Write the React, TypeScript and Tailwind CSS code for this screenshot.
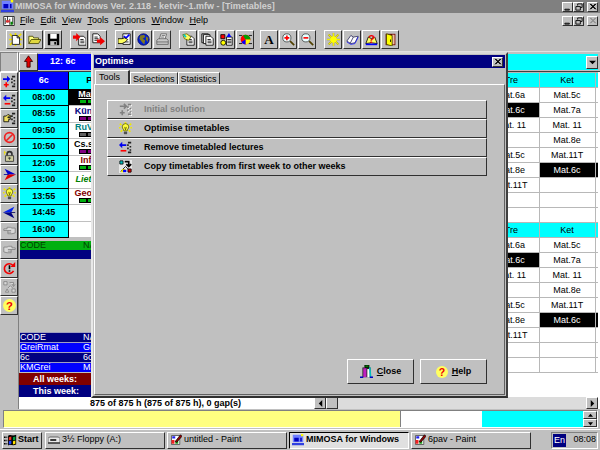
import React, { useState } from 'react';
import clsx from 'clsx';

const RAISED = 'border border-t-white border-l-white border-r-[#303030] border-b-[#303030] bg-[#c0c0c0]';
const SUNKEN = 'border border-t-[#808080] border-l-[#808080] border-r-white border-b-white';

type IconName =
  | 'app' | 'doc' | 'new' | 'open' | 'save' | 'import' | 'export' | 'props' | 'world' | 'print'
  | 'find' | 'copy' | 'shapes' | 'pie' | 'zoomIn' | 'zoomOut' | 'sun' | 'book' | 'guide' | 'exit'
  | 'up' | 'add' | 'remove' | 'initial' | 'hand' | 'forbid' | 'lock' | 'right' | 'bulb' | 'left' | 'font'
  | 'handLeft' | 'handRight' | 'cycle' | 'weeksOff' | 'weeks' | 'help' | 'close' | 'windows' | 'floppy' | 'paint';

// column of lecture marks shared by the add / remove / initial icons
const dots = (fill: string) => <path d="M11 1h4v2h-4zM10 4h2v2h-2zM13 6h2v2h-2zM10 8h2v2h-2zM13 10h2v2h-2zM11 13h4v2h-4z" fill={fill} />;

const page = (x: number, y: number) => (
  <g transform={`translate(${x} ${y})`}>
    <path d="M0 0h6l3 3v8h-9z" fill="#fff" stroke="#000" />
    <path d="M2 4h4M2 6h5M2 8h5" stroke="#000" />
  </g>
);

const ICONS: Record<IconName, React.ReactNode> = {
  app: (
    <>
      <path d="M1 1h14v10H1z" fill="#7080ff" />
      <path d="M0 12h16v3H0z" fill="#3040e0" />
      <path d="M3 5h6v5H3zM11 5h2v5h-2z" fill="#0000c0" />
      <path d="M12 0h3v3h-3z" fill="#ff0" />
    </>
  ),
  doc: (
    <>
      <path d="M1 2h14v12H1z" fill="#fff" stroke="#000" />
      <path d="M3 4v8M6 2v8M9 5v8M13 3v9" stroke="#000" />
      <path d="M4 7h5v3H4z" fill="#e03030" />
      <path d="M10 9h3v4h-3z" fill="#008000" />
    </>
  ),
  new: (
    <>
      <path d="M8 0v16M0 8h16M1 1l14 14M15 1L1 15" stroke="#f0e000" strokeWidth="2" />
      <path d="M4 3h6l3 3v8H4z" fill="#fff" stroke="#000" />
      <path d="M10 3v3h3" fill="none" stroke="#000" />
    </>
  ),
  open: (
    <>
      <path d="M1 13V4h5l1 2h6v3" fill="#ffff80" stroke="#404000" />
      <path d="M1 13l3-5h12l-3 5z" fill="#e0d840" stroke="#404000" />
    </>
  ),
  save: (
    <>
      <path d="M1 1h14v14H1z" fill="#000" />
      <path d="M4 1h8v6H4z" fill="#fff" />
      <path d="M4 10h8v5H4z" fill="#c0c0c0" />
      <path d="M9 11h2v3H9z" fill="#000" />
    </>
  ),
  import: (
    <>
      {page(7, 4)}
      <path d="M0 3h4V0l5 5-5 5V7H0z" fill="#f00000" />
    </>
  ),
  export: (
    <>
      {page(1, 1)}
      <path d="M6 8h4V5l6 5-6 5v-3H6z" fill="#f00000" />
    </>
  ),
  props: (
    <>
      <path d="M6 1h9v13H6z" fill="#fff" stroke="#000" />
      <path d="M7 4l3 2 4-4" stroke="#00f" fill="none" strokeWidth="2" />
      <path d="M8 11h5" stroke="#000" />
      <path d="M0 7h5l3-1 4 2-3 3-4 2H0z" fill="#ffff60" stroke="#000" />
    </>
  ),
  world: (
    <>
      <circle cx="8" cy="8" r="7" fill="#0020d0" stroke="#000060" />
      <path d="M4 3l5-1 1 3-3 2 3 2-1 5-3-3-3-4zM11 4l3 2-1 5-2-3z" fill="#807820" />
    </>
  ),
  print: (
    <>
      <path d="M4 8l2-7h7l-2 7z" fill="#f0f0f0" stroke="#606060" />
      <path d="M1 9l2-2h10l2 2v5H1z" fill="#c8c8c8" stroke="#606060" />
      <path d="M1 11h14M7 3h4M6 5h4" stroke="#606060" />
    </>
  ),
  find: (
    <>
      {page(6, 4)}
      <path d="M1 2l5-1 5 4-3 4-5-2z" fill="#ffff60" stroke="#606000" />
      <path d="M2 2l3 3" stroke="#0cc" strokeWidth="2" />
    </>
  ),
  copy: (
    <>
      <path d="M1 1h8v11H1z" fill="#c0c0c0" stroke="#000" />
      <path d="M3 2h8v11H3z" fill="#fff" stroke="#000" />
      {page(6, 4)}
    </>
  ),
  shapes: (
    <>
      <path d="M1 2h5v5H1z" fill="#f00" stroke="#000" />
      <circle cx="4" cy="12" r="3" fill="#ff0" stroke="#000" />
      <path d="M8 5h7v10H8z" fill="#fff" stroke="#000" />
      <path d="M9 8h5M9 10h5M9 12h5" stroke="#000" />
      <path d="M8 5l3-5 3 5z" fill="#00f" />
    </>
  ),
  pie: (
    <>
      <path d="M0 3h4M12 3h4M0 13h4M12 13h4" stroke="#000" />
      <circle cx="8" cy="8" r="6" fill="#f00" />
      <path d="M8 8L5 3a6 6 0 0 1 9 5z" fill="#00a000" />
      <path d="M8 8h6a6 6 0 0 1-6 6z" fill="#ff0" />
      <path d="M8 8v6a6 6 0 0 1-5-3z" fill="#00f" />
    </>
  ),
  font: null,
  zoomIn: (
    <>
      <path d="M10 10l5 5" stroke="#504000" strokeWidth="2" />
      <circle cx="6" cy="6" r="5" fill="#e8ffff" stroke="#404040" />
      <path d="M3 6h6M6 3v6" stroke="#f00" strokeWidth="2" />
    </>
  ),
  zoomOut: (
    <>
      <path d="M10 10l5 5" stroke="#504000" strokeWidth="2" />
      <circle cx="6" cy="6" r="5" fill="#e8ffff" stroke="#404040" />
      <path d="M3 6h6" stroke="#f00" strokeWidth="2" />
    </>
  ),
  sun: (
    <>
      <path d="M8 0v16M0 8h16M2 2l12 12M14 2L2 14" stroke="#b0a800" strokeWidth="2" />
      <path d="M8 0v16M0 8h16M2 2l12 12M14 2L2 14" stroke="#ff0" />
      <circle cx="8" cy="8" r="4" fill="#ff0" />
    </>
  ),
  book: (
    <>
      <path d="M1 10l5-7 3 2 6-1-4 8-5 1z" fill="#fff" stroke="#303060" />
      <path d="M1 11l5 3 5-1 4-8" fill="none" stroke="#2020ff" />
      <path d="M9 5l-4 8" stroke="#303060" />
    </>
  ),
  guide: (
    <>
      <path d="M1 13l3-8 4 2 4-2 3 8-7-1z" fill="#ffff60" stroke="#000" />
      <path d="M1 14h14" stroke="#00f" strokeWidth="2" />
      <text x="8" y="12" textAnchor="middle" fill="#f00000" className="text-[14px] font-bold">?</text>
    </>
  ),
  exit: (
    <>
      <path d="M2 1h12v14H2z" fill="#700000" />
      <path d="M10 2h3v12h-3z" fill="#f0c0a0" />
      <path d="M3 1l7 2v13l-7-2z" fill="#ff0" stroke="#404000" />
      <path d="M8 8v3" stroke="#000" />
    </>
  ),
  up: <path d="M8 1l5 7h-3v7H6V8H3z" fill="#e00000" stroke="#300000" />,
  add: (
    <>
      {dots('#202020')}
      <path d="M0 4h5V1l4 4-4 4V6H0z" fill="#0000f0" />
      <path d="M1 12h6M4 9v6" stroke="#f00" strokeWidth="2" />
    </>
  ),
  remove: (
    <>
      {dots('#202020')}
      <path d="M9 4H4V1L0 5l4 4V6h5z" fill="#0000f0" />
      <path d="M2 12h7" stroke="#f00" strokeWidth="2" />
    </>
  ),
  initial: (
    <>
      <g transform="translate(1 1)">{dots('#fff')}</g>
      {dots('#808080')}
      <path d="M1 4h7M6 1l3 3-3 3M1 12h6M4 9v6" fill="none" stroke="#808080" strokeWidth="2" />
    </>
  ),
  hand: (
    <>
      <path d="M1 5h3l2-2 4 2v1H6v1h3v2H7v3H1z" fill="#f0e060" stroke="#000" />
      {dots('#202020')}
    </>
  ),
  forbid: (
    <>
      <circle cx="8" cy="8" r="6" fill="none" stroke="#f02020" strokeWidth="2" />
      <path d="M4 12l8-8" stroke="#f02020" strokeWidth="2" />
    </>
  ),
  lock: (
    <>
      <path d="M5 7V5c0-4 6-4 6 0v2" fill="none" stroke="#303030" strokeWidth="2" />
      <path d="M3 7h10v7H3z" fill="#d0d0a0" stroke="#303030" />
      <path d="M8 9v3M6 10h4" stroke="#303030" />
      <path d="M1 3h3M2 1v5" stroke="#f0e000" />
    </>
  ),
  right: (
    <>
      <path d="M2 1l14 7H6z" fill="#0000d0" />
      <path d="M2 15l14-7H6z" fill="#e00000" />
      <path d="M1 8h6" stroke="#0000a0" />
    </>
  ),
  left: (
    <>
      <path d="M14 1L0 8h10z" fill="#0020f0" />
      <path d="M14 15L0 8h10z" fill="#000080" />
      <path d="M9 8h6" stroke="#000060" />
    </>
  ),
  bulb: (
    <>
      <path d="M8 0v2M1 2l2 2M15 2l-2 2M0 7h2M14 7h2M2 12l2-2M14 12l-2-2" stroke="#f0e800" strokeWidth="2" />
      <path d="M6 11c0-2-2-3-2-5a4 4 0 0 1 8 0c0 2-2 3-2 5z" fill="#ffff40" stroke="#606000" />
      <path d="M6 12h4v3H6z" fill="#505050" />
      <path d="M7 6l1 4 1-4" fill="none" stroke="#606000" />
    </>
  ),
  handLeft: <path d="M15 5h-4L9 4H5v2H1v2h5v4h5l4-1zM6 8h4M6 10h4" fill="#d8d8d8" stroke="#808080" />,
  handRight: <path d="M1 5h4l2-1h4v2h4v2h-5v4H5l-4-1zM10 8H6M10 10H6" fill="#d8d8d8" stroke="#808080" />,
  cycle: (
    <>
      <path d="M12 4a6 6 0 1 0 1 7" fill="none" stroke="#f00000" strokeWidth="2" />
      <path d="M9 6l6 0V0z" fill="#f00000" />
      <path d="M8 4v5M8 10v2" stroke="#000" strokeWidth="2" />
    </>
  ),
  weeksOff: <path d="M1 2h4v4H1zM6 10l3-3 3 3M3 15l2-4 2 4zM11 11h4v4h-4zM8 3h5v4M11 5l2 3 2-3" fill="#d8d8d8" stroke="#808080" />,
  weeks: (
    <>
      <path d="M0 0h16v16H0z" fill="#e8e8e8" />
      <path d="M1 1h4v4H1z" fill="#00c0c0" stroke="#000" />
      <path d="M7 2h5v5M9 5l3 3 3-3" fill="none" stroke="#000" strokeWidth="2" />
      <path d="M8 8l-6 6M8 8l3 3" fill="none" stroke="#000" />
      <path d="M4 11h4l-2 4H2z" fill="#e8e000" />
      <path d="M5 12h4v3H5z" fill="#00f" />
      <path d="M11 11h4v4h-4z" fill="#e00000" stroke="#000" />
    </>
  ),
  help: (
    <>
      <circle cx="8" cy="8" r="8" fill="#ffff60" />
      <text x="8" y="13" textAnchor="middle" fill="#f00000" className="text-[14px] font-bold">?</text>
    </>
  ),
  close: (
    <>
      <path d="M3 3h10v12H3z" fill="#202020" />
      <path d="M4 4h4v11H4z" fill="#c020c0" />
      <path d="M9 5h3v10H9z" fill="#fff" />
      <path d="M12 3l1 12" stroke="#00c0c0" strokeWidth="2" />
      <path d="M6 0h5v3H6z" fill="#008000" stroke="#000" />
      <path d="M0 15h4M12 15h4" stroke="#0000c0" strokeWidth="2" />
    </>
  ),
  windows: (
    <>
      <path d="M5 2c3-2 4 1 10-1v12c-5 2-7-1-10 1z" fill="#000" />
      <path d="M6 4l3-1v4l-3 1z" fill="#f03020" />
      <path d="M11 4l3-1v4l-3 1z" fill="#00a040" />
      <path d="M6 9l3-1v4l-3 1z" fill="#2040ff" />
      <path d="M11 9l3-1v4l-3 1z" fill="#ffe000" />
      <path d="M0 4h2M3 4h1M0 8h2M3 8h1M0 12h2M3 12h1" stroke="#000" strokeWidth="2" />
    </>
  ),
  floppy: (
    <>
      <path d="M0 6l2-2h12l2 2v6H0z" fill="#e8e8e8" stroke="#404040" />
      <path d="M3 8h8" stroke="#000" strokeWidth="2" />
      <path d="M0 12h16" stroke="#404040" strokeWidth="2" />
    </>
  ),
  paint: (
    <>
      <path d="M2 2h11v12H2z" fill="#fff" stroke="#404040" />
      <path d="M2 8h4v5H2z" fill="#f02020" />
      <path d="M7 9h4v4H7z" fill="#20a020" />
      <path d="M3 3h4v3H3z" fill="#2020f0" />
      <path d="M7 10l7-9 2 2-7 8z" fill="#a00000" stroke="#000" />
    </>
  ),
};

const Icon: React.FC<{ name: IconName; className?: string }> = ({ name, className = 'size-[13px]' }) => (
  <svg viewBox="0 0 16 16" className={clsx('shrink-0', className)} aria-hidden="true">
    {ICONS[name]}
  </svg>
);

const Hot: React.FC<{ label: string }> = ({ label }) => (
  <span>
    <span className="underline underline-offset-1">{label[0]}</span>
    {label.slice(1)}
  </span>
);

const TOOL_GROUPS: { gap: string; tools: [IconName, string][] }[] = [
  { gap: 'ml-1.5', tools: [['new', 'New'], ['open', 'Open'], ['save', 'Save']] },
  { gap: 'ml-2', tools: [['import', 'Import'], ['export', 'Export']] },
  { gap: 'ml-2', tools: [['props', 'Properties'], ['world', 'Web'], ['print', 'Print']] },
  { gap: 'ml-2', tools: [['find', 'Select'], ['copy', 'Copy'], ['shapes', 'Resources'], ['pie', 'Statistics']] },
  { gap: 'ml-1.5', tools: [['font', 'Font'], ['zoomIn', 'Zoom in'], ['zoomOut', 'Zoom out']] },
  { gap: 'ml-2', tools: [['sun', 'Optimise'], ['book', 'Manual'], ['guide', 'Guide'], ['exit', 'Exit']] },
];

const SIDE_TOOLS: [IconName, string][] = [
  ['add', 'Add lecture'], ['remove', 'Remove lecture'], ['hand', 'Pick'], ['forbid', 'Forbid'], ['lock', 'Lock'],
  ['right', 'Next'], ['bulb', 'Optimise'], ['left', 'Previous'], ['handLeft', 'Back'], ['handRight', 'Forward'],
  ['cycle', 'Redo'], ['weeksOff', 'Copy weeks'], ['help', 'Help'],
];

const LESSONS = [
  { time: '08:00', name: 'Mat.', cell: 'bg-black text-white underline', bar: 'bg-[#00b010]' },
  { time: '08:55', name: 'Kün.s', cell: 'text-[#000080]', bar: 'bg-[#800080]' },
  { time: '09:50', name: 'RuV.s', cell: 'text-[#008080]', bar: 'bg-[#606060]' },
  { time: '10:50', name: 'Cs.s.k', cell: 'text-black', bar: 'bg-[#800080]' },
  { time: '12:05', name: 'Inf.', cell: 'text-[#800000]', bar: 'bg-[#00b010]' },
  { time: '13:00', name: 'Liet.k', cell: 'text-[#008000] italic', bar: '' },
  { time: '13:55', name: 'Geo.p', cell: 'text-[#800000]', bar: 'bg-[#00b010]' },
  { time: '14:45', name: '', cell: '', bar: '' },
  { time: '16:00', name: '', cell: '', bar: '' },
];

const RESOURCES = [
  ['CODE', 'NAME', 'bg-[#000080]'],
  ['GreiRmat', 'Grei', 'bg-[#0000ff]'],
  ['6c', '6c', 'bg-[#000080]'],
  ['KMGrei', 'Mat', 'bg-[#0000ff]'],
];

const WEEK = [
  ['Mat.6a', 'Mat.5c'],
  ['Mat.6c', 'Mat.7a'],
  ['Mat. 11', 'Mat. 11'],
  ['', 'Mat.8e'],
  ['Mat.5c', 'Mat.11T'],
  ['Mat.8e', 'Mat.6c'],
  ['Mat.11T', ''],
  ['', ''],
  ['', ''],
];

const ACTIONS: { icon: IconName; label: string; disabled?: boolean }[] = [
  { icon: 'initial', label: 'Initial solution', disabled: true },
  { icon: 'bulb', label: 'Optimise timetables' },
  { icon: 'remove', label: 'Remove timetabled lectures' },
  { icon: 'weeks', label: 'Copy timetables from first week to other weeks' },
];

const TASKS: { icon: IconName; label: string; active?: boolean }[] = [
  { icon: 'floppy', label: '3½ Floppy (A:)' },
  { icon: 'paint', label: 'untitled - Paint' },
  { icon: 'app', label: 'MIMOSA for Windows', active: true },
  { icon: 'paint', label: '6pav - Paint' },
];

const GLYPHS = {
  min: 'M1 7h5v1H1z',
  restore: 'M3 3V1h5v4H6M1 4h5v4H1z',
  x: 'M1 1l6 6M7 1L1 7M2 1l6 6M8 1L2 7',
};

const CaptionButton: React.FC<{ glyph: keyof typeof GLYPHS; label: string; disabled?: boolean }> = ({ glyph, label, disabled }) => (
  <button aria-label={label} disabled={disabled} className={clsx('flex h-[10px] w-[11px] items-center justify-center', RAISED)}>
    <svg viewBox="0 0 9 9" className="size-[8px]" aria-hidden="true">
      <path d={GLYPHS[glyph]} fill="none" stroke={disabled ? '#909090' : '#000'} />
    </svg>
  </button>
);

const CaptionButtons: React.FC<{ closeDisabled?: boolean }> = ({ closeDisabled }) => (
  <div className="ml-auto mr-0.5 flex">
    <CaptionButton glyph="min" label="Minimise" />
    <CaptionButton glyph="restore" label="Restore" />
    <span className="w-[3px]" />
    <CaptionButton glyph="x" label="Close" disabled={closeDisabled} />
  </div>
);

const Arrow: React.FC<{ d: string; className?: string }> = ({ d, className = 'size-[7px]' }) => (
  <svg viewBox="0 0 8 8" className={className} aria-hidden="true"><path d={d} fill="#000" /></svg>
);

const ClassTimetable = () => (
  <table className="ml-px w-[86px] table-fixed border-collapse text-center text-[9px] leading-[9px] font-bold">
    <thead>
      <tr className="h-[17px]">
        <th className="w-12 border-r border-b border-black bg-[#0000ff] text-white">6c</th>
        <th className="border-b border-black bg-[#00ffff] p-0 pl-2.5">Pir</th>
      </tr>
    </thead>
    <tbody>
      {LESSONS.map((l, i) => (
        <tr key={l.time} className={i % 2 ? 'h-[17px]' : 'h-4'}>
          <th className="border-r border-b border-black bg-[#00ffff] p-0">{l.time}</th>
          <td className={clsx('border-b border-[#c0c0c0] p-0', l.cell)}>
            <div className="leading-[9px]">{l.name}</div>
            {l.bar && (
              <div className="flex justify-center">
                <span className={clsx('h-[5px] w-2 border border-black', l.bar)} />
                <span className={clsx('h-[5px] w-2 border border-black', l.bar)} />
              </div>
            )}
          </td>
        </tr>
      ))}
    </tbody>
  </table>
);

const WeekTable = () => (
  <table className="w-[115px] table-fixed border-collapse text-center text-[9px] leading-[10px]">
    <thead>
      <tr className="h-[15px] bg-[#00ffff]">
        {['Tre', 'Ket'].map(day => <th key={day} className="border border-[#b8b8b8] p-0 font-normal">{day}</th>)}
        <td className="w-[3px] border-y border-[#b8b8b8] p-0" />
      </tr>
    </thead>
    <tbody>
      {WEEK.map((row, r) => (
        <tr key={r} className="h-[15px]">
          {row.map((cell, c) => (
            <td key={c} className={clsx('border border-[#b8b8b8] p-0', cell === 'Mat.6c' && 'bg-black text-white')}>{cell}</td>
          ))}
          <td className={clsx('border-y border-[#b8b8b8] p-0', row[1] === 'Mat.6c' && 'bg-black')} />
        </tr>
      ))}
    </tbody>
  </table>
);

const TABS = ['Tools', 'Selections', 'Statistics'];

const OptimiseDialog = () => {
  const [tab, setTab] = useState('Tools');

  return (
    <div
      role="dialog"
      aria-label="Optimise"
      className="absolute top-[52px] right-[92px] bottom-[52px] left-[91px] flex flex-col border-2 border-t-[#d8d8d8] border-l-[#e8e8e8] border-r-[#404040] border-b-[#303030] bg-[#c0c0c0] p-px"
    >
      <div className="flex h-[13px] shrink-0 items-center bg-[#000080] pr-0.5 pl-px text-[9px] font-bold text-white">
        Optimise
        <span className="ml-auto flex"><CaptionButton glyph="x" label="Close dialog" /></span>
      </div>
      <div role="tablist" className="mt-0.5 flex h-[14px] shrink-0 items-end pl-px text-[9px] leading-[10px]">
        {TABS.map(t => (
          <button
            key={t}
            role="tab"
            aria-selected={t === tab}
            onClick={() => setTab(t)}
            className={clsx(
              'border-t border-l border-t-white border-l-white border-r-[#303030] px-0.5',
              t === tab ? 'h-[14px] w-[35px] border-r-2 pb-0.5 pl-[3px] text-left' : 'h-3 border-r',
            )}
          >
            {t}
          </button>
        ))}
      </div>
      <div role="tabpanel" className="flex flex-1 flex-col border border-t-white border-l-white border-r-[#606060] border-b-[#606060] pt-[15px] pr-[17px] pb-[10px] pl-[12px]">
        <div className="flex flex-col">
          {ACTIONS.map(a => (
            <button
              key={a.label}
              disabled={a.disabled}
              className={clsx('flex h-[19px] items-center gap-3 pl-[11px] text-left text-[9px] font-bold', RAISED, a.disabled && 'text-[#808080]')}
            >
              <Icon name={a.icon} />
              {a.label}
            </button>
          ))}
        </div>
        <div className="mt-auto flex justify-end gap-1.5 text-[9px] font-bold">
          <button className={clsx('flex h-[25px] w-[67px] items-center justify-center gap-1', RAISED)}>
            <Icon name="close" />
            <Hot label="Close" />
          </button>
          <button className={clsx('flex h-[25px] w-[67px] items-center justify-center gap-1', RAISED)}>
            <Icon name="help" className="size-3" />
            <Hot label="Help" />
          </button>
        </div>
      </div>
    </div>
  );
};

export default function App() {
  return (
    <div className="relative flex min-h-screen flex-col overflow-hidden bg-[#c0c0c0] font-['Liberation_Sans',Arial,sans-serif] text-[9px] text-black">
      <header className="flex h-[13px] items-center gap-px bg-[#808080] pl-px font-bold text-[#d0d0d0]">
        <Icon name="app" />
        <h1 className="whitespace-nowrap">MIMOSA for Windows Ver. 2.118 - ketvir~1.mfw - [Timetables]</h1>
        <CaptionButtons />
      </header>

      <nav className="flex h-[15px] items-center pl-[3px]">
        <Icon name="doc" className="mr-[5px] size-3" />
        <div className="flex gap-1.5">
          {['File', 'Edit', 'View', 'Tools', 'Options', 'Window', 'Help'].map(m => <button key={m}><Hot label={m} /></button>)}
        </div>
        <CaptionButtons closeDisabled />
      </nav>

      <div className="flex h-6 items-center border-b border-[#e0e0e0]">
        {TOOL_GROUPS.map((g, i) => (
          <div key={i} className={clsx('flex gap-px', g.gap)}>
            {g.tools.map(([icon, label]) => (
              <button key={icon} aria-label={label} className={clsx('flex h-[19px] w-[18px] items-center justify-center', RAISED)}>
                {icon === 'font'
                  ? <span className="font-['Liberation_Serif',serif] text-[13px] leading-[16px] font-bold">A</span>
                  : <Icon name={icon} />}
              </button>
            ))}
          </div>
        ))}
      </div>

      <div className="flex flex-1">
        <aside className="flex w-[19px] shrink-0 flex-col border-r border-[#808080]">
          <div className={clsx('h-5', SUNKEN)} />
          <div className="grid h-[243px] auto-rows-fr">
            {SIDE_TOOLS.map(([icon, label]) => (
              <button key={icon} aria-label={label} className={clsx('flex items-center justify-center', RAISED)}>
                <Icon name={icon} />
              </button>
            ))}
          </div>
        </aside>

        <div className="flex min-w-0 flex-1 flex-col">
          <div className="flex h-5 items-center border-b border-[#404040] pr-0.5">
            <button aria-label="Up" className={clsx('flex h-[18px] w-[19px] items-center justify-center', RAISED)}>
              <Icon name="up" />
            </button>
            <div className="flex h-4 w-[200px] items-center bg-[#0000ff] pl-3 font-bold text-white">12: 6c</div>
            <div className="relative flex h-4 flex-1 bg-[#00ffff]">
              <select aria-label="Resource" className="h-full w-full appearance-none bg-[#00ffff]" />
              <span className={clsx('pointer-events-none absolute top-0.5 right-0 flex h-[13px] w-3 items-center justify-center', RAISED)}>
                <Arrow d="M0 2h8L4 6z" />
              </span>
            </div>
          </div>

          <div className="flex flex-1">
            <div className="flex w-[220px] flex-col">
              <div className="bg-white"><ClassTimetable /></div>
              <div className="mt-[3px] ml-px flex h-[9px] items-center bg-[#00b010] text-[9px] leading-[9px] text-[#004000]">
                <span className="w-[63px]">CODE</span>
                <span>NAME</span>
              </div>
              <div className="ml-px h-[9px] bg-[#000080]" />
              <table className="mt-auto ml-px table-fixed text-left text-[9px] leading-[9px] text-white">
                <tbody>
                  {RESOURCES.map(([code, name, bg]) => (
                    <tr key={code} className={clsx('h-[10px] border-t border-[#a0a0c0]', bg)}>
                      <td className="w-[63px] p-0">{code}</td>
                      <td className="p-0">{name}</td>
                    </tr>
                  ))}
                </tbody>
              </table>
              <div className="mt-px w-[72px] bg-[#800000] pr-3.5 text-right leading-[12px] font-bold text-white">All weeks:</div>
              <div className="w-[72px] bg-[#000080] pr-3 text-right leading-[12px] font-bold text-white">This week:</div>
            </div>
            <div className="flex flex-1 flex-col items-end bg-white pr-0.5">
              <WeekTable />
              <div className="-mt-px"><WeekTable /></div>
            </div>
          </div>

          <div className="flex h-3 items-center bg-white pr-0.5">
            <div className="w-[295px] pl-[71px] leading-[12px] font-bold whitespace-nowrap">875 of 875 h (875 of 875 h), 0 gap(s)</div>
            <div className="flex h-full flex-1 bg-[#dcdcdc]">
              <button aria-label="Scroll left" className={clsx('flex w-3 items-center justify-center', RAISED)}><Arrow d="M6 0v8L2 4z" /></button>
              <span className={clsx('w-3', RAISED)} />
              <button aria-label="Scroll right" className={clsx('ml-auto flex w-3 items-center justify-center', RAISED)}><Arrow d="M2 0v8l4-4z" /></button>
            </div>
          </div>
        </div>
      </div>

      <div className={clsx('mt-px mr-0.5 ml-[3px] flex h-[18px]', SUNKEN)}>
        <div className="flex-1 bg-[#ffff80]" />
        <div className="w-[82px] border-l border-[#808080] bg-white" />
        <div className="w-[101px] bg-[#00ffff]" />
        <div className="flex w-[14px] flex-col">
          <button aria-label="Scroll up" className={clsx('flex flex-1 items-center justify-center', RAISED)}><Arrow d="M0 6h8L4 1z" className="size-[5px]" /></button>
          <button aria-label="Scroll down" className={clsx('flex flex-1 items-center justify-center', RAISED)}><Arrow d="M0 2h8L4 7z" className="size-[5px]" /></button>
        </div>
      </div>

      <footer className="mt-px flex h-[21px] items-center border-t border-white px-0.5">
        <button className={clsx('flex h-[17px] w-10 items-center gap-px pl-px font-bold', RAISED)}>
          <Icon name="windows" />
          Start
        </button>
        <div className="ml-[3px] flex flex-1 gap-0.5">
          {TASKS.map(t => (
            <button
              key={t.label}
              className={clsx(
                'flex h-[17px] min-w-0 flex-1 items-center gap-0.5 pl-0.5 whitespace-nowrap',
                t.active ? 'border border-t-black border-l-black border-r-white border-b-white bg-[#e0e0e0] font-bold' : RAISED,
              )}
            >
              <Icon name={t.icon} className="size-3" />
              {t.label}
            </button>
          ))}
        </div>
        <div className={clsx('ml-5 flex h-[17px] w-[47px] items-center justify-between px-px', SUNKEN)}>
          <span className="bg-[#000080] px-px leading-[13px] text-white">En</span>
          <span>08:08</span>
        </div>
      </footer>

      <OptimiseDialog />
    </div>
  );
}
